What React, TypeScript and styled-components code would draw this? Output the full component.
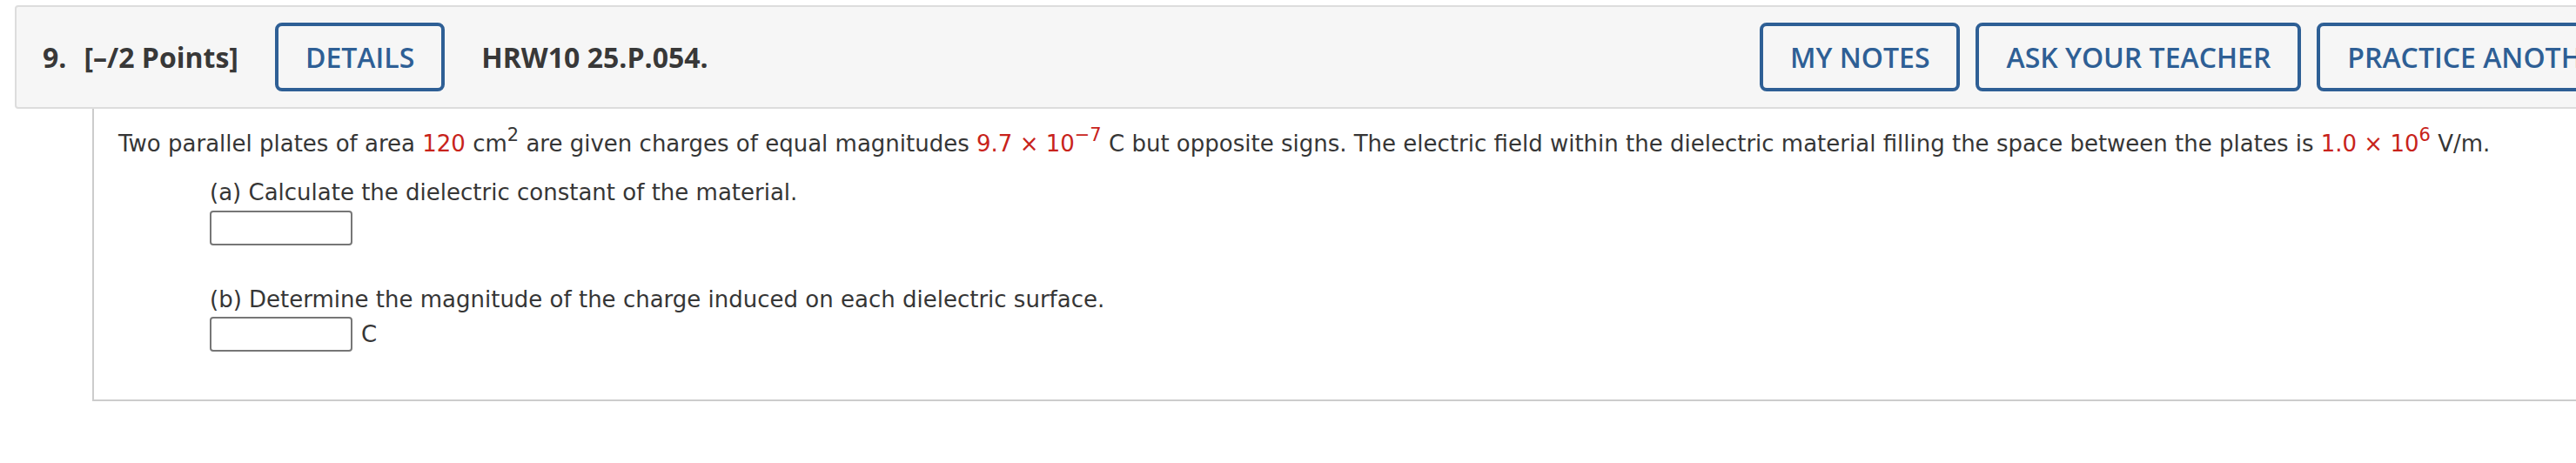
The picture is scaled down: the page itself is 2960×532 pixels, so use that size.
import styled, { createGlobalStyle } from 'styled-components'

const GlobalStyle = createGlobalStyle`
    body {
        margin: 0;
        background: #ffffff;
        overflow: hidden;
    }
`

const Page = styled.div`
    width: 3053px;
    padding: 6px 0 0 17px;
`

const Header = styled.div`
    display: flex;
    align-items: center;
    height: 115px;
    padding: 0 28px 0 30px;
    background: #f6f6f6;
    border: 2px solid #dddddd;
    border-radius: 4px;
    font-family: 'Open Sans', 'Liberation Sans', sans-serif;
`

const HeaderGroup = styled.div<{ $right?: boolean }>`
    display: flex;
    align-items: center;
    gap: ${p => (p.$right ? '18px' : '42px')};
    margin-left: ${p => (p.$right ? 'auto' : '0')};
`

const Title = styled.span`
    display: flex;
    gap: 20px;
    font-size: 32px;
    font-weight: 700;
    color: #383838;
    white-space: nowrap;
`

const HeaderButton = styled.button`
    height: 79px;
    padding: 0 31px;
    background: transparent;
    border: 4px solid #2e5f95;
    border-radius: 8px;
    color: #2e5f95;
    font-family: 'Open Sans', 'Liberation Sans', sans-serif;
    font-size: 32px;
    font-weight: 600;
    white-space: nowrap;
`

const Body = styled.div`
    margin-left: 89px;
    padding: 22px 0 55px 28px;
    border-left: 2px solid #cccccc;
    border-bottom: 2px solid #cccccc;
    font-family: 'DejaVu Sans', Verdana, sans-serif;
    font-size: 26px;
    line-height: 36px;
    color: #363636;
`

const Question = styled.div`
    white-space: nowrap;
`

const Red = styled.span`
    color: #c8231b;
`

const Sup = styled.span`
    font-size: 21px;
    line-height: 0;
    vertical-align: 12px;
`

const Part = styled.div<{ $gap: number }>`
    margin: ${p => p.$gap}px 0 0 105px;
`

const AnswerRow = styled.div<{ $gap: number }>`
    display: flex;
    align-items: center;
    gap: 10px;
    margin-top: ${p => p.$gap}px;
`

const AnswerBox = styled.input`
    box-sizing: border-box;
    width: 164px;
    height: 40px;
    margin: 0;
    border: 2px solid #767676;
    border-radius: 4px;
    background: #ffffff;
`

export default function App() {
    return (
        <Page>
            <GlobalStyle />
            <Header>
                <HeaderGroup>
                    <Title>
                        <span>9.</span>
                        <span>[–/2 Points]</span>
                    </Title>
                    <HeaderButton>DETAILS</HeaderButton>
                    <Title>HRW10 25.P.054.</Title>
                </HeaderGroup>
                <HeaderGroup $right>
                    <HeaderButton>MY NOTES</HeaderButton>
                    <HeaderButton>ASK YOUR TEACHER</HeaderButton>
                    <HeaderButton>PRACTICE ANOTHER</HeaderButton>
                </HeaderGroup>
            </Header>
            <Body>
                <Question>
                    Two parallel plates of area <Red>120</Red> cm<Sup>2</Sup> are given charges of equal magnitudes{' '}
                    <Red>9.7 × 10<Sup>−7</Sup></Red> C but opposite signs. The electric field within the dielectric
                    material filling the space between the plates is <Red>1.0 × 10<Sup>6</Sup></Red> V/m.
                </Question>
                <Part $gap={20}>
                    <div>(a) Calculate the dielectric constant of the material.</div>
                    <AnswerRow $gap={3}>
                        <AnswerBox type="text" />
                    </AnswerRow>
                </Part>
                <Part $gap={44}>
                    <div>(b) Determine the magnitude of the charge induced on each dielectric surface.</div>
                    <AnswerRow $gap={2}>
                        <AnswerBox type="text" />
                        <span>C</span>
                    </AnswerRow>
                </Part>
            </Body>
        </Page>
    )
}
